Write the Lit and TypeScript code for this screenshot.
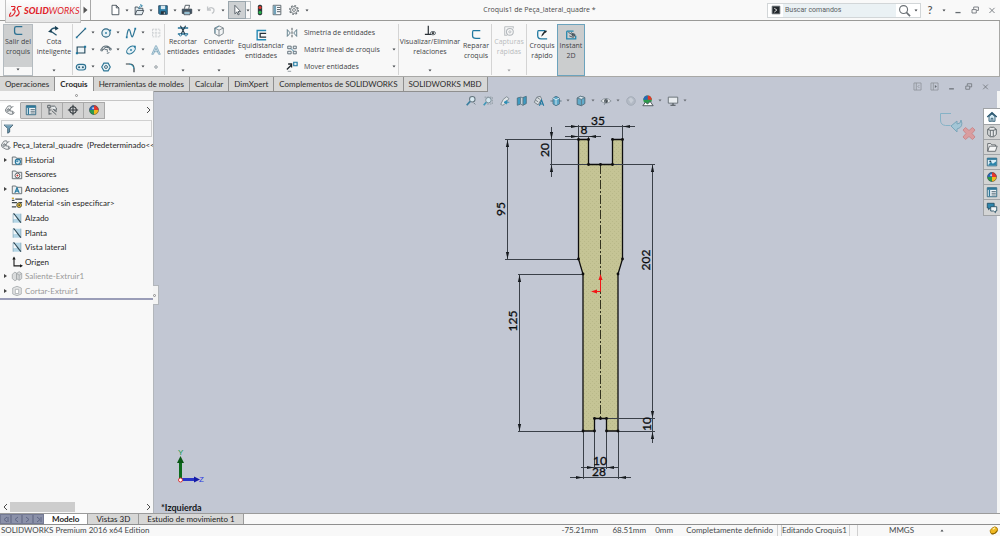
import { LitElement, html, svg, css, nothing, SVGTemplateResult } from "lit";
import { customElement, property } from "lit/decorators.js";
import { classMap } from "lit/directives/class-map.js";

const INK = "#3c4650";
const BLUE = "#1f78a0";
const TEAL = "#2a9cc0";

/* Every glyph is drawn on a 14 x 14 grid. */
const glyphs: Record<string, SVGTemplateResult> = {
  page: svg`<path d="M3.5 1.5h5l3 3v8h-8zM8.500 1.500v3h3" fill="#fff" stroke=${INK} />`,
  open: svg`<path d="M2.500 12.500v-9h3l1 1.500h5v3M2.500 12.500l2-5h8l-2 5z" fill="#e4ecf1" stroke=${INK} /><path d="M7 6c0-3 1-4 3-4M8.500.500l2.500 1.500-2 2" fill="none" stroke=${BLUE} />`,
  save: svg`<path d="M2 2h10v10H3l-1-1z" fill="#2c7ca5" stroke="#24405a" /><path d="M4.500 2h5v4h-5z" fill="#d8e8f0" /><path d="M4.500 8.500h5.500V12H4.500z" fill="#26323c" /><path d="M8 9.500h1V12H8z" fill="#dfe6ea" />`,
  print: svg`<path d="M4 5.500l1-4h5l-1 4" fill="#fff" stroke=${INK} /><path d="M1.500 6h11v5h-11z" fill="#3e5668" stroke=${INK} /><path d="M3.500 8.500h7v4h-7z" fill="#eef4f7" stroke=${INK} /><path d="M4 10.500h6" stroke=${BLUE} />`,
  undo: svg`<path d="M3 3v4h4M3.500 6.500C6 3 11 4 10.500 8c-.2 1.500-1 2.500-2.500 3" fill="none" stroke="#c3c6c9" stroke-width="1.500" />`,
  cursor: svg`<path d="M4.500 1.500v10l2.300-2.200 1.500 3.400 1.400-.7-1.500-3.200h3z" fill="#fff" stroke=${INK} stroke-width=".9" />`,
  traffic: svg`<rect x="4.500" y="1" width="5" height="12" rx="2" fill="#2b3a3c" /><circle cx="7" cy="4" r="1.800" fill="#e4372e" /><circle cx="7" cy="9.800" r="1.800" fill="#28b04a" />`,
  list: svg`<path d="M2.500 1.500h9v11h-9z" fill="#fff" stroke="#4e5960" /><path d="M3 2h3v10H3z" fill="#73a3ba" /><path d="M7 4h4M7 6.500h4M7 9h4" stroke=${INK} />`,
  gear: svg`<circle cx="7" cy="7" r="5" fill="none" stroke="#6c7479" stroke-width="1.600" stroke-dasharray="2 1.900" /><circle cx="7" cy="7" r="4" fill="#f9f9f9" stroke="#6c7479" stroke-width="1" /><circle cx="7" cy="7" r="1.700" fill="none" stroke="#6c7479" />`,
  exitSketch: svg`<path d="M12 2H5Q3 2 3 4v4q0 3 3 3h6" fill="none" stroke="#2c7192" stroke-width="1.500" />`,
  sketch: svg`<path d="M12 2H4Q3 2 3 4v4q0 3 4 3h5" fill="none" stroke=${BLUE} stroke-width="1.500" />`,
  dimension: svg`<path d="M2 8Q5 2 11 4M3 7l7 5" fill="none" stroke="#28566f" stroke-width="1.500" /><path d="M0 8l4-3 .5 4zM8 1l4.500 3L8.500 6.500z" fill="#183e52" />`,
  line: svg`<path d="M2.500 11.500l9-9" stroke="#2a617d" stroke-width="1.400" /><path d="M1 11h2v2H1zM11 1h2v2h-2z" fill=${BLUE} />`,
  circle: svg`<circle cx="7" cy="7" r="4.800" fill="#e8f2f6" stroke="#2c6683" stroke-width="1.300" /><path d="M6 6h2v2H6zM11 3h2v2h-2z" fill=${BLUE} />`,
  spline: svg`<path d="M2 12C3 2 5 1 6 5s2 9 3.500 5L12 2" fill="none" stroke="#2f7696" stroke-width="1.400" /><path d="M1 11h2v2H1zM11 1h2v2h-2z" fill=${BLUE} />`,
  grid: svg`<path d="M3 2.500h8.500v9H3zM3 7h8.500M7 2.500v9" fill="none" stroke="#c4c8cb" stroke-dasharray="2 1" />`,
  rectangle: svg`<path d="M2.500 3.500h9v7h-9z" fill="#edf5f8" stroke="#21465a" stroke-width="1.300" /><path d="M1 9.500h2.500V12H1zM10.500 2H13v2.500h-2.500z" fill=${BLUE} />`,
  arc: svg`<path d="M2 6C3 1 11 1 12 6M4 7c1-4 5-4 6-2" fill="none" stroke="#5b6d77" stroke-width="1.200" /><path d="M5.500 6.500h3v3M1 6h2v2H1zM11 5h2v2h-2z" fill="none" stroke="#566771" /><path d="M8 11l3-1" stroke="#566771" />`,
  ellipse: svg`<ellipse cx="7" cy="7" rx="5.800" ry="3.600" transform="rotate(-40 7 7)" fill="#e5f1f6" stroke="#2d7797" stroke-width="1.300" /><path d="M6 6h2v2H6zM10.500 2h2v2h-2z" fill=${BLUE} />`,
  text: svg`<path d="M2 12L6.500 2h1L12 12h-2L7 5l-3 7zM4.500 9h5" fill="#cfe1ea" stroke="#7aa4ba" stroke-width=".9" />`,
  slot: svg`<rect x="1.500" y="4" width="11" height="6.500" rx="3.200" fill="#dcecf3" stroke="#2e7292" stroke-width="1.300" /><circle cx="4.800" cy="7.200" r="1.200" fill="#2e5c75" /><circle cx="9.200" cy="7.200" r="1.200" fill="#2e5c75" />`,
  polygon: svg`<path d="M4.500 2.500h5L12 7l-2.500 4.500h-5L2 7z" fill="#e8f2f6" stroke="#2d7797" stroke-width="1.300" /><circle cx="7" cy="7" r="1.700" fill="none" stroke="#2b586e" />`,
  fillet: svg`<path d="M1 3.500h4Q10.500 3.500 10.500 9v4" fill="none" stroke="#303a40" stroke-width="1.400" /><path d="M5 3.500Q10 4 10.500 9" fill="none" stroke=${TEAL} />`,
  point: svg`<circle cx="7" cy="7" r="1.500" fill="#e8eef0" stroke="#8a9297" />`,
  trim: svg`<path d="M1 3.500h12M1 10.500h12" stroke="#237198" stroke-width="1.500" /><path d="M4 1l6 11M10 1L4 12" stroke="#233b49" stroke-width="1.300" /><circle cx="4" cy="11.500" r="1.300" fill="#fff" stroke="#237198" /><circle cx="10.500" cy="11.500" r="1.300" fill="#fff" stroke="#237198" />`,
  cube: svg`<path d="M7 1l5 2.500v6.500l-5 3L2 10V3.500zM2 3.500l5 2.500 5-2.500M7 6v7" fill="#f3f5f6" stroke="#737d83" /><path d="M2.500 9.800V4L7 1.500" stroke="#5f8ca1" fill="none" />`,
  offset: svg`<path d="M13 1.700H2.500v10.800H13" fill="none" stroke="#2389b4" stroke-width="1.600" /><path d="M13 5H6v4.500h7" fill="none" stroke="#25313a" stroke-width="1.500" />`,
  mirror: svg`<path d="M7 1v12" stroke="#303a40" stroke-dasharray="3 1" /><path d="M1.500 3v8l3.500-4zM12.500 3v8L9 7z" fill="#eef3f5" stroke="#52717f" />`,
  pattern: svg`<path d="M2 2.500h4v3H2zM8.500 2.500h3.500v3H8.500zM2 8.500h4v3H2zM8.500 8.500h3.500v3H8.500z" fill="#e8f1f5" stroke="#55646d" /><path d="M6 5.500l3 3" stroke=${BLUE} />`,
  move: svg`<path d="M9 1.500h4v4H9z" fill="#e4f1f7" stroke=${BLUE} stroke-width="1.300" /><path d="M1 10l5-5M2.500 3.500h4v4" fill="none" stroke="#20282d" stroke-width="1.500" /><path d="M2 12h4" stroke="#8a9398" />`,
  relations: svg`<path d="M5 1v10M1 11h8" stroke="#2a3136" stroke-width="1.400" /><ellipse cx="10.500" cy="9.500" rx="3" ry="2" fill="#dfe5e8" stroke="#555f65" /><circle cx="10.500" cy="9.500" r="1.200" fill="#333" />`,
  capture: svg`<path d="M2 2h10v2M2 2v10h3" fill="none" stroke="#babec1" stroke-width="1.200" /><circle cx="8" cy="8" r="4" fill="none" stroke="#b3b8bc" stroke-width="1.200" /><circle cx="8" cy="8" r="1.300" fill="none" stroke="#b3b8bc" />`,
  rapid: svg`<path d="M11 2H3Q2 2 2 4v4q0 3.500 4 3.500h7" fill="none" stroke=${BLUE} stroke-width="1.500" /><path d="M6 9l1-3 3-4h3l-1.500 2.500h-1L8.500 7z" fill="#1e262b" />`,
  instant: svg`<path d="M2 2.500h8M2 2.500v9h10.500V8" fill="none" stroke="#2287ae" stroke-width="1.500" /><path d="M4 4l7 4M7 4l5 4M5 8l5 2" stroke="#394a54" /><circle cx="10" cy="7" r="1.600" fill="none" stroke="#394a54" />`,
  part: svg`<path d="M1.500 7l3-4.500 3-.5 1 2-2 4 4 .5 1.500 2-2 1.500H7L2.500 9.500z" fill="#eceeef" stroke="#62696e" stroke-width=".9" /><path d="M8 4l3-1M7.500 7.500L5 5M10 9v2.500" stroke="#62696e" stroke-width=".9" fill="none" /><circle cx="4.500" cy="7.500" r="1.300" fill="#b9bec1" stroke="#62696e" stroke-width=".7" />`,
  props: svg`<path d="M1.500 2h11v10.500h-11z" fill="#eef4f7" stroke="#235e7a" /><path d="M1.500 2h11v2.500h-11z" fill="#2d7799" /><path d="M4 4.500V12" stroke="#2d7799" stroke-width="1.600" /><path d="M6.500 6.500h5M6.500 8.500h5M6.500 10.500h5" stroke="#4d6370" />`,
  config: svg`<path d="M2 1.500h3v3H2zM3.500 4.500v8M3.500 7h3M3.500 11.500h3" fill="none" stroke="#4a5359" /><path d="M6 2.500h4l2 2v3L8 6M7 8l5 4.500M9.500 7.500l3 1.500" fill="#e8ecee" stroke="#4a5359" />`,
  target: svg`<circle cx="7" cy="7" r="3.800" fill="none" stroke="#2c3338" stroke-width="1.200" /><path d="M7 1v12M1 7h12" stroke="#2c3338" stroke-width="1.200" />`,
  ball: svg`<path d="M7 7L7 1.500A5.500 5.500 0 0 1 12.500 7z" fill="#e6352b" /><path d="M7 7h5.500A5.500 5.500 0 0 1 7 12.500z" fill="#f1b71d" /><path d="M7 7v5.500A5.500 5.500 0 0 1 1.500 7z" fill="#2a9b4c" /><path d="M7 7H1.500A5.500 5.500 0 0 1 7 1.500z" fill="#2767b8" /><circle cx="7" cy="7" r="5.300" fill="none" stroke="#37414a" stroke-width=".6" /><circle cx="6" cy="5" r="1.200" fill="#fff" opacity=".7" />`,
  funnel: svg`<path d="M1.500 2.500h11L8.500 7v4.500L6 13V7z" fill="#6f9fb8" stroke="#2b4d61" /><path d="M2.500 2.500h9" stroke="#d6e7ef" />`,
  history: svg`<path d="M1.500 12.500v-9h4l1 1.500h6v7.500z" fill="#eceff1" stroke="#596268" /><circle cx="8" cy="9" r="3" fill="#d9eef7" stroke="#23749b" stroke-width="1.300" /><path d="M5 8l3 1V7" stroke="#23749b" fill="none" />`,
  sensor: svg`<path d="M1.500 12.500v-9h4l1 1.500h6v7.500z" fill="#eceff1" stroke="#596268" /><circle cx="7.500" cy="8.800" r="2.800" fill="#fff" stroke="#4b5358" /><circle cx="7.500" cy="8.800" r="1.200" fill="#c0352c" />`,
  notes: svg`<path d="M1.500 12.500v-9h4l1 1.500h6v7.500z" fill="#eceff1" stroke="#596268" /><path d="M4.500 11.500l2.500-6 2.500 6M5.500 9.500h3" fill="none" stroke="#1f78a0" stroke-width="1.300" />`,
  material: svg`<path d="M5 2.500h8M1 6.500h6M1 11.500h5M1 4h3M9 6.500h4" stroke="#3e474d" stroke-width="1.400" /><path d="M1 1.500h2.500" stroke="#c9a227" stroke-width="1.500" /><circle cx="9.500" cy="9.500" r="2.800" fill="#e5bd3c" stroke="#4c4a35" /><circle cx="9.500" cy="9.500" r=".9" fill="#333" />`,
  plane: svg`<path d="M2.500 2h9v10.500h-9z" fill="#b4d6e6" /><path d="M2.500 2v10.500M11.500 2v10.500" stroke="#86aabb" /><path d="M3 1.500l8.500 11" stroke="#2e4652" stroke-width="1.300" /><path d="M3 2.500v6L7 8z" fill="#f1f6f8" />`,
  origin: svg`<path d="M3.500 2v9.500H12" fill="none" stroke="#1c1c1c" stroke-width="1.300" /><path d="M1.500 4l2-3.500 2 3.500zM10.500 9.500l3.500 2-3.500 2z" fill="#1c1c1c" />`,
  boss: svg`<path d="M1.500 5l3-2.500 2 1v8l-2 1-3-2.500zM6.500 4l3-2 3 2v6l-3 2-3-2z" fill="#dadcdd" stroke="#a3a7aa" /><path d="M9.500 6v6M6.500 4l3 2 3-2" stroke="#a3a7aa" fill="none" />`,
  cut: svg`<path d="M2 3.500l5-2 5 2v7l-5 2-5-2z" fill="#e4e5e6" stroke="#a9adb0" /><path d="M5 5h4v5H5z" fill="#fff" stroke="#a9adb0" />`,
  zoomFit: svg`<circle cx="8.500" cy="5" r="3.200" fill="#d9ebf3" stroke="#64747d" stroke-width="1.200" /><path d="M6 7.500l-4 4.500" stroke="#3b7f9f" stroke-width="2" /><path d="M10 9l2 2" stroke="#64747d" />`,
  zoomArea: svg`<path d="M3 2.500h9v8H6" fill="none" stroke="#8b979e" stroke-dasharray="2 1" /><circle cx="7.500" cy="6" r="3.200" fill="#d5e6ef" stroke="#7a8b95" stroke-width="1.100" /><path d="M5 8.500L2 12" stroke="#3e97b8" stroke-width="2" />`,
  prevView: svg`<path d="M2 11l3-6 4-3 2.500 2-3 5-4 3z" fill="#dfe4e7" stroke="#78848b" /><path d="M6 8.500h6M6 8.500l3-2v4z" stroke="#2b8db5" fill="#2b8db5" />`,
  section: svg`<path d="M1.500 3.500l4-1v8l-4 1.500zM8 3l4-1.500V10l-4 2z" fill="#3c9ac2" stroke="#4b6f80" /><path d="M5.500 2.500L8 3v9l-2.500-1.500z" fill="#d5e4eb" stroke="#667a85" />`,
  dynamic: svg`<path d="M1.500 8.500l3-6 4-1 1.500 3-4 7z" fill="#d8dde0" stroke="#6d777e" /><path d="M3 6l3 2M5 3l3 2" stroke="#6d777e" /><path d="M7.500 12.500L10 6l2.500 6.500M8.500 10.500h3" fill="none" stroke="#1f78a0" stroke-width="1.300" />`,
  orient: svg`<path d="M3.500 3.500l3.500-2 4 2v7l-4 2-3.500-2z" fill="#5aa7c8" stroke="#4c7285" /><path d="M7 5.500v6M3.500 3.500L7 5.500l4-2" stroke="#e5f1f6" fill="none" /><path d="M.5 7h3M11 7h2.500" stroke="#4b6776" />`,
  display: svg`<path d="M2.500 3.500l4-2 5 1.500v7l-4 2.500-5-1.500z" fill="#62abca" stroke="#4c6572" /><path d="M2.500 3.500l5 1.500 4-2-5-1.500zM7.500 5v7.500" fill="#dcebf2" stroke="#5c7582" />`,
  eye: svg`<path d="M1 7q6-6 12 0-6 5-12 0z" fill="#e8ebee" stroke="#7f8a92" stroke-width=".9" /><circle cx="7" cy="7" r="2.200" fill="#42494e" /><path d="M5 11.500l3-8" stroke="#7f8a92" />`,
  ghostBall: svg`<circle cx="7" cy="7" r="5" fill="#b3bac5" stroke="#a2a9b4" /><path d="M4 5l3-2 3 3-3 4z" fill="#c7cdd6" />`,
  scene: svg`<circle cx="6.500" cy="5.500" r="5" fill="#2c9b4b" /><path d="M6.500 5.500v-5a5 5 0 0 1 5 5z" fill="#e6352b" /><path d="M6.500 5.500h-5a5 5 0 0 1 5-5z" fill="#2767b8" /><path d="M1 12.500l3-4 2.500 2 3-3 3.500 5z" fill="#fff" stroke="#3d464c" />`,
  monitor: svg`<path d="M1.500 2.500h11v7h-11z" fill="#e8ecef" stroke="#5d666c" /><path d="M7 9.500v2M4 12h6" stroke="#454d52" stroke-width="1.300" />`,
  dockLeft: svg`<path d="M2.500 2.500h9v9h-9zM5.500 2.500v9M9.500 5L7.500 7l2 2" fill="none" stroke="#8d9299" />`,
  dockRight: svg`<path d="M2.500 2.500h9v9h-9zM5.500 2.500v9" fill="none" stroke="#8d9299" /><path d="M7.500 5l2.500 2-2.500 2z" fill="#62686e" />`,
  min: svg`<path d="M4 10h6" stroke="#666c72" stroke-width="1.500" />`,
  restore: svg`<path d="M3.500 6.500h5v4h-5zM5.500 6V3.500h5.500v4H9" fill="none" stroke="#6d7277" />`,
  close: svg`<path d="M4 4.500l6 6M10 4.500l-6 6" stroke="#6d7277" />`,
  lens: svg`<circle cx="6" cy="6" r="4.300" fill="none" stroke="#6a7075" stroke-width="1.200" /><path d="M9 9l4 4" stroke="#6a7075" stroke-width="1.700" />`,
  prompt: svg`<path d="M2.500 2.500h9v9h-9z" fill="#23282c" stroke="#6d7479" /><path d="M5 5l3 2-3 2.500" fill="none" stroke="#fff" />`,
  home: svg`<path d="M1.500 7L7 2l5.500 5" fill="none" stroke="#22516b" stroke-width="1.500" /><path d="M3.500 6.500V12h7V6.500L7 3.500z" fill="#d6ebf4" stroke="#22516b" /><path d="M6 12V8.500h2V12" fill="#fff" stroke="#22516b" />`,
  library: svg`<path d="M2 4l3-2.500h4L12 4v6l-3 2.500H5L2 10z" fill="#e7e9ea" stroke="#4d555a" /><path d="M5 5v7M8.500 5v7M2 4l3 1h3.500L12 4" fill="none" stroke="#4d555a" />`,
  folder: svg`<path d="M2 12V3h3.500l1 1.500H11V6M2 12l2-6h9l-2 6z" fill="#f5f6f6" stroke="#595f63" />`,
  palette: svg`<path d="M1.500 2.500h11v9h-11z" fill="#d9edf6" stroke="#2b607b" /><path d="M1.500 2.500h11v2h-11z" fill="#2d7799" /><path d="M3 9.500L6 7l2 2 4-3v5H3z" fill="#2c85ab" /><circle cx="5" cy="6.500" r="1.200" fill="#21495e" />`,
  chat: svg`<path d="M1.500 1.500h8v5.500H5l-2 2V7H1.500z" fill="#2f86ad" stroke="#234d62" /><path d="M5.500 5.500h7v5H11v2l-2-2H5.500z" fill="#f4f7f8" stroke="#234d62" />`,
  coin: svg`<ellipse cx="7.500" cy="7" rx="5.200" ry="3.800" transform="rotate(-40 7.500 7)" fill="#efb820" stroke="#a97c0d" /><path d="M4 11q5 1 8-4" stroke="#8c6606" stroke-width="1.300" fill="none" /><path d="M6 5.500l3-2" stroke="#fff3b8" stroke-width="1.500" />`,
};

const drawGlyph = (name: string, size = 12) =>
  html`<svg class="glyph" width=${size} height=${size} viewBox="0 0 14 14" aria-hidden="true">${glyphs[name]}</svg>`;

const drawCaret = () =>
  html`<svg class="caret" width="4" height="3" viewBox="0 0 4 3" aria-hidden="true"><path d="M.5.500h3L2 2.500z" fill="#3f4448" /></svg>`;

const base = css`
  :host,
  * {
    box-sizing: border-box;
  }
  button,
  input {
    font: inherit;
    color: inherit;
    border: 0;
    padding: 0;
    margin: 0;
    background: none;
    border-radius: 0;
    outline: 0;
  }
  button {
    display: flex;
    align-items: center;
    justify-content: center;
  }
  svg {
    display: block;
    flex: none;
  }
`;

@customElement("sw-titlebar")
export class SwTitlebar extends LitElement {
  static styles = [
    base,
    css`
      :host {
        display: grid;
        grid-template-columns: auto 1fr auto;
        align-items: center;
        height: 21px;
        background: #f9f9f9;
        border-bottom: 1px solid #9a9a98;
        position: relative;
        z-index: 1;
      }
      .left,
      .right {
        display: flex;
        align-items: center;
        height: 20px;
      }
      .logo {
        align-self: flex-start;
        height: 23px;
        width: 76px;
        margin-left: 5px;
        padding-left: 3px;
        display: flex;
        align-items: center;
        gap: 2px;
        background: linear-gradient(#fdfdfd, #e6e6e6);
        border: 1px solid #c2c2c2;
        border-top: 0;
        color: #e0242b;
        font: italic 9px/20px "Lato", sans-serif;
      }
      .logo b {
        font-weight: 900;
      }
      .expand {
        width: 10px;
        height: 20px;
        border-right: 1px solid #a8a8a8;
      }
      .tools {
        display: flex;
        align-items: center;
        padding-left: 17px;
      }
      .tool {
        width: 14px;
        height: 18px;
      }
      .drop {
        width: 10px;
        height: 18px;
      }
      .pair {
        display: flex;
      }
      .pair.on .tool {
        background: #cdd0d2;
        width: 18px;
        border: 1px solid #9aa6ad;
      }
      .pair.on .drop {
        width: 5px;
        border: 1px solid #b9c0c4;
        border-left: 0;
      }
      .single {
        width: 17px;
        height: 18px;
      }
      h1 {
        margin: 0;
        font-family: "Open Sans", sans-serif;
        font-size: 7px;
        font-weight: 400;
        text-align: center;
        color: #4a4a4a;
      }
      .search {
        display: flex;
        align-items: center;
        width: 154px;
        height: 15px;
        border: 1px solid #d2d6d8;
        background: #fff;
      }
      .search label {
        width: 15px;
        display: flex;
        justify-content: center;
      }
      .search input {
        flex: 1;
        min-width: 0;
        height: 13px;
        background: #eaf1f4;
        padding-left: 2px;
        font-family: "Roboto", sans-serif;
        font-size: 7px;
      }
      .search input::placeholder {
        color: #5a5f63;
        opacity: 1;
      }
      .search .find {
        width: 16px;
      }
      .search .drop {
        width: 8px;
        height: 13px;
      }
      .help {
        width: 18px;
        font-size: 11px;
        font-weight: 600;
        color: #555;
      }
      .win {
        width: 17px;
        height: 18px;
      }
    `,
  ];

  render() {
    const pairs = [["page", "Nuevo"], ["open", "Abrir"], ["save", "Guardar"], ["print", "Imprimir"], ["undo", "Deshacer"], ["cursor", "Seleccionar"]];
    return html`
      <div class="left">
        <div class="logo">
          <svg width="13" height="15" viewBox="0 0 13 15" aria-hidden="true">
            <path d="M2 2.500h3.500q1 .5 0 2L4 6M3 6h2.500Q7 7 5 10t-5 2l2-3.500M12.500 2.500H9.500Q7.500 4 9 6t1 3.500Q9 12 6.500 12" fill="none" stroke="#e0242b" stroke-width="1.200" />
          </svg>
          <span><b>SOLID</b>WORKS</span>
        </div>
        <button class="expand" aria-label="Menú">
          <svg width="5" height="8" viewBox="0 0 5 8"><path d="M.5.500L4.500 4 .500 7.500z" fill="#555" /></svg>
        </button>
        <div class="tools">
          ${pairs.map(
            ([g, t]) => html`<div class=${classMap({ pair: true, on: g === "cursor" })}>
              <button class="tool" aria-label=${t}>${drawGlyph(g)}</button>
              <button class="drop" aria-label=${t + ", opciones"}>${drawCaret()}</button>
            </div>`
          )}
          <button class="single" aria-label="Reconstruir">${drawGlyph("traffic")}</button>
          <button class="single" aria-label="Propiedades">${drawGlyph("list")}</button>
          <button class="single" aria-label="Opciones">${drawGlyph("gear")}</button>
          <button class="drop" aria-label="Más opciones">${drawCaret()}</button>
        </div>
      </div>
      <h1>Croquis1 de Peça_lateral_quadre *</h1>
      <div class="right">
        <div class="search">
          <label for="q" aria-label="Buscar comandos">${drawGlyph("prompt", 12)}</label>
          <input id="q" type="text" placeholder="Buscar comandos" />
          <button class="find" aria-label="Buscar">${drawGlyph("lens", 13)}</button>
          <button class="drop" aria-label="Ámbito">${drawCaret()}</button>
        </div>
        <button class="help">?</button>
        <button class="drop" aria-label="Ayuda">${drawCaret()}</button>
        ${["min", "restore", "close"].map((g) => html`<button class="win" aria-label=${g}>${drawGlyph(g)}</button>`)}
      </div>
    `;
  }
}

@customElement("sw-ribbon")
export class SwRibbon extends LitElement {
  static styles = [
    base,
    css`
      :host {
        display: flex;
        height: 56px;
        padding: 3px 0 0 3px;
        background: #f8f8f8;
        border-bottom: 1px solid #a8a8a6;
        border-right: 1px solid #a8a8a6;
        font-family: "Open Sans", sans-serif;
        font-size: 7px;
        line-height: 10px;
        color: #3f4447;
      }
      .big {
        flex-direction: column;
        justify-content: flex-start;
        padding-top: 1px;
        height: 52px;
        text-align: center;
        white-space: nowrap;
      }
      .big .caret {
        margin: auto 0 4px;
      }
      .low {
        padding-top: 5px;
      }
      .w28 {
        width: 28px;
      }
      .w30 {
        width: 30px;
      }
      .w34 {
        width: 34px;
      }
      .w36 {
        width: 36px;
      }
      .w48 {
        width: 48px;
      }
      .w62 {
        width: 62px;
      }
      .on {
        background: linear-gradient(#cdcfd0 0 42px, #f8f8f8 42px);
        border: 1px solid #b4bbc0;
        padding-top: 0;
      }
      .on.low {
        background: #cbcdce;
        border-color: #6ba3bd;
        padding-top: 4px;
      }
      .off {
        color: #b9bcbe;
      }
      .off .caret {
        opacity: 0.5;
      }
      .sep {
        width: 1px;
        height: 51px;
        background: #d4d4d4;
        flex: none;
      }
      .gap {
        margin-left: 3px;
      }
      .grid {
        display: grid;
        grid-template-columns: 25px 25px 25px 16px;
        grid-template-rows: repeat(3, 17px);
      }
      .cell {
        display: flex;
        align-items: center;
      }
      .cell .tool {
        width: 16px;
        height: 17px;
      }
      .cell .drop {
        width: 8px;
        height: 17px;
      }
      .rows {
        width: 113px;
        display: grid;
        grid-template-rows: repeat(3, 17px);
      }
      .row {
        display: flex;
        align-items: center;
        text-align: left;
      }
      .row .main {
        flex: 1;
        justify-content: flex-start;
        gap: 6px;
        padding-left: 1px;
      }
      .row .drop {
        width: 9px;
        height: 17px;
      }
    `,
  ];

  private big(g: string, lines: string[], cls: string, caret = true) {
    return html`<button class="big ${cls}" ?disabled=${cls.includes("off")}>
      ${drawGlyph(g)}<span>${lines[0]}<br />${lines[1]}</span>${caret ? drawCaret() : nothing}
    </button>`;
  }

  render() {
    const cells: [string, boolean][] = [
      ["line", true], ["circle", true], ["spline", true], ["grid", false],
      ["rectangle", true], ["arc", true], ["ellipse", true], ["text", false],
      ["slot", true], ["polygon", false], ["fillet", true], ["point", false],
    ];
    const rows: [string, string, boolean][] = [
      ["mirror", "Simetría de entidades", false],
      ["pattern", "Matriz lineal de croquis", true],
      ["move", "Mover entidades", true],
    ];
    return html`
      ${this.big("exitSketch", ["Salir del", "croquis"], "w30 on")}
      ${this.big("dimension", ["Cota", "inteligente"], "w36 gap")}
      <div class="sep"></div>
      <div class="grid">
        ${cells.map(
          ([g, c]) => html`<div class="cell">
            <button class="tool" aria-label=${g}>${drawGlyph(g)}</button>
            ${c ? html`<button class="drop" aria-label=${g + " +"}>${drawCaret()}</button>` : nothing}
          </div>`
        )}
      </div>
      <div class="sep"></div>
      ${this.big("trim", ["Recortar", "entidades"], "w36")}
      ${this.big("cube", ["Convertir", "entidades"], "w36")}
      ${this.big("offset", ["Equidistanciar", "entidades"], "w48 low", false)}
      <div class="rows">
        ${rows.map(
          ([g, t, c]) => html`<div class="row">
            <button class="main">${drawGlyph(g)}<span>${t}</span></button>
            ${c ? html`<button class="drop" aria-label=${t + " +"}>${drawCaret()}</button>` : nothing}
          </div>`
        )}
      </div>
      <div class="sep"></div>
      ${this.big("relations", ["Visualizar/Eliminar", "relaciones"], "w62")}
      ${this.big("sketch", ["Reparar", "croquis"], "w30 low", false)}
      <div class="sep"></div>
      ${this.big("capture", ["Capturas", "rápidas"], "w34 off")}
      <div class="sep"></div>
      ${this.big("rapid", ["Croquis", "rápido"], "w30 low", false)}
      ${this.big("instant", ["Instant", "2D"], "w28 low on", false)}
    `;
  }
}

@customElement("sw-command-tabs")
export class SwCommandTabs extends LitElement {
  static styles = [
    base,
    css`
      :host {
        display: flex;
        justify-content: space-between;
        height: 14px;
        font-size: 8px;
        color: #2b2b2b;
      }
      .tabs,
      .controls {
        display: flex;
      }
      .tab {
        height: 15px;
        padding: 0 5px;
        background: #d7d7d6;
        border-right: 1px solid #8f8f8f;
        border-bottom: 1px solid #8f8f8f;
        white-space: nowrap;
      }
      .active {
        background: #f8f8f8;
        border-bottom-color: #f8f8f8;
        font-weight: 700;
      }
      .controls {
        padding-right: 6px;
      }
      .win {
        width: 17px;
        height: 18px;
      }
    `,
  ];

  render() {
    const tabs = ["Operaciones", "Croquis", "Herramientas de moldes", "Calcular", "DimXpert", "Complementos de SOLIDWORKS", "SOLIDWORKS MBD"];
    return html`
      <div class="tabs" role="tablist">
        ${tabs.map((t, i) => html`<button role="tab" class=${classMap({ tab: true, active: i === 1 })}>${t}</button>`)}
      </div>
      <div class="controls">
        ${["dockLeft", "dockRight", "min", "restore", "close"].map(
          (g) => html`<button class="win" aria-label=${g}>${drawGlyph(g, 11)}</button>`
        )}
      </div>
    `;
  }
}

@customElement("sw-feature-tree")
export class SwFeatureTree extends LitElement {
  static styles = [
    base,
    css`
      :host {
        display: flex;
        flex-direction: column;
        position: relative;
        width: 154px;
        background: #f8f8f8;
        border-right: 1px solid #b2b6bb;
        font-size: 8px;
        color: #1f1f1f;
      }
      .grip {
        height: 10px;
        display: flex;
        align-items: center;
        justify-content: center;
        border-bottom: 1px solid #c6c6c6;
      }
      .dot {
        width: 3px;
        height: 3px;
        border-radius: 50%;
        border: 1px solid #8c8c8c;
      }
      .tabs {
        display: flex;
        align-items: center;
        height: 18px;
        padding-right: 1px;
      }
      .tab {
        width: 21px;
        height: 17px;
        background: #d2d2d2;
        border: 1px solid #a9a9a9;
        border-left: 0;
      }
      .tab.active {
        background: #fff;
        border-color: #f8f8f8 #a9a9a9 #f8f8f8 #f8f8f8;
      }
      .more {
        margin-left: auto;
        width: 8px;
      }
      .filter {
        display: flex;
        align-items: center;
        height: 17px;
        margin: 1px;
        border: 1px solid #d0d0d0;
      }
      .filter input {
        flex: 1;
        min-width: 0;
        height: 14px;
      }
      ul {
        list-style: none;
        margin: 0;
        padding: 0;
        height: 162px;
        display: flex;
        flex-direction: column;
        border-bottom: 2px solid #9a9db8;
      }
      li {
        flex: 1;
        display: flex;
        align-items: center;
        white-space: pre;
        overflow: hidden;
      }
      .toggle {
        width: 10px;
        height: 12px;
      }
      .glyph {
        margin: 0 2px 0 1px;
      }
      .root .glyph {
        margin: 0 1px 0 0;
      }
      .dim {
        color: #989898;
      }
      .scroll {
        margin-top: auto;
        height: 12px;
        display: flex;
        align-items: center;
      }
      .scroll button {
        width: 10px;
        height: 12px;
      }
      .track {
        flex: 1;
        height: 10px;
      }
      .thumb {
        width: 49%;
        height: 10px;
        background: #cdcdcd;
      }
      .handle {
        position: absolute;
        left: 153px;
        top: 194px;
        width: 6px;
        height: 20px;
        display: flex;
        align-items: center;
        background: #f4f4f4;
        border: 1px solid #b2b6bb;
        border-left: 0;
      }
    `,
  ];

  private chevron(d: string) {
    return html`<svg width="5" height="8" viewBox="0 0 5 8" aria-hidden="true"><path d=${d} fill="none" stroke="#4a4a4a" /></svg>`;
  }

  render() {
    const items: [string, string, boolean, boolean][] = [
      ["history", "Historial", true, false],
      ["sensor", "Sensores", false, false],
      ["notes", "Anotaciones", true, false],
      ["material", "Material <sin especificar>", false, false],
      ["plane", "Alzado", false, false],
      ["plane", "Planta", false, false],
      ["plane", "Vista lateral", false, false],
      ["origin", "Origen", false, false],
      ["boss", "Saliente-Extruir1", true, true],
      ["cut", "Cortar-Extruir1", true, true],
    ];
    return html`
      <div class="grip"><span class="dot"></span></div>
      <div class="tabs">
        ${["part", "props", "config", "target", "ball"].map(
          (g, i) => html`<button class=${classMap({ tab: true, active: i === 0 })} aria-label=${g}>${drawGlyph(g)}</button>`
        )}
        <button class="more" aria-label="Más">${this.chevron("M1 1l3 3-3 3")}</button>
      </div>
      <div class="filter">
        <label for="f" aria-label="Filtrar">${drawGlyph("funnel", 11)}</label>
        <input id="f" type="text" />
      </div>
      <ul>
        <li class="root">${drawGlyph("part")}Peça_lateral_quadre  (Predeterminado&lt;&lt;</li>
        ${items.map(
          ([g, t, open, dim]) => html`<li class=${classMap({ dim })}>
            ${open
              ? html`<button class="toggle" aria-label=${"Expandir " + t}>
                  <svg width="3" height="4" viewBox="0 0 3 4"><path d="M0 0l3 2-3 2z" fill="#444" /></svg></button
                >`
              : html`<span class="toggle"></span>`}${drawGlyph(g)}<span>${t}</span>
          </li>`
        )}
      </ul>
      <div class="scroll">
        <button aria-label="Izquierda">${this.chevron("M4 1L1 4l3 3")}</button>
        <div class="track"><div class="thumb"></div></div>
        <button aria-label="Derecha">${this.chevron("M1 1l3 3-3 3")}</button>
      </div>
      <div class="handle"><span class="dot"></span></div>
    `;
  }
}

const arrowHead = (x: number, y: number, dir: "l" | "r" | "u" | "d") => {
  const shapes = {
    l: `M${x} ${y}l7-1.600v3.200z`,
    r: `M${x} ${y}l-7-1.600v3.200z`,
    u: `M${x} ${y}l-1.600 7h3.200z`,
    d: `M${x} ${y}l-1.600-7h3.200z`,
  };
  return svg`<path d=${shapes[dir]} fill="#161a1e" />`;
};

const dimText = (x: number, y: number, value: string, upright = true) =>
  svg`<text x=${x} y=${y} class="dim" transform=${upright ? nothing : `rotate(-90 ${x} ${y})`}>${value}</text>`;

@customElement("sw-sketch")
export class SwSketch extends LitElement {
  static styles = css`
    :host {
      display: block;
    }
    svg {
      display: block;
    }
    .dim {
      font: 400 12px "Lato", sans-serif;
      text-anchor: middle;
      dominant-baseline: central;
      fill: #0c0e10;
      stroke: #0c0e10;
      stroke-width: 0.3px;
    }
  `;

  render() {
    const nodes = [
      [578.5, 139.5], [588.5, 139.5], [588.5, 164.5], [600.5, 164.5], [612.5, 164.5], [612.5, 139.5], [622.5, 139.5], [622.5, 259],
      [618, 274], [618, 431], [606.5, 431], [606.5, 418.5], [600.5, 418.5], [594.5, 418.5], [594.5, 431], [583, 431], [583, 274], [578.5, 259],
    ];
    return html`
      <svg width="191" height="374" viewBox="480 110 191 374" role="img" aria-label="Croquis acotado">
        <defs>
          <pattern id="grain" width="4" height="4" patternUnits="userSpaceOnUse">
            <path d="M0 0h4v4H0z" fill="#c5c495" />
            <path d="M0 1h1v1H0zM2 3h1v1H2z" fill="#b9b989" />
          </pattern>
        </defs>
        <path
          d="M578.500 139.500H588.500V164.500H612.500V139.500H622.500V259L618 274V431H606.500V418.500H594.500V431H583V274L578.500 259Z"
          fill="url(#grain)" stroke="#0d0d0d" stroke-width="1.300"
        />
        <path d="M600.500 165V418" stroke="#33331f" stroke-dasharray="9 2 2 2" />
        <g stroke="#3a4048" fill="none">
          <path d="M505 139.500H578M550 164.500H588M505 259.500H578M518 274.500H582M518 431.500H582M613 164.500H655M607 418.500H655M619 431.500H655" />
          <path d="M578.500 125V139M622.500 125V139M588.500 136V139M583.500 432V479M618.500 432V479M594.500 432V469M606.500 432V469" />
          <path d="M565 126.500H635M565 136.500H601M581 467.500H619M570 477.500H631" />
          <path d="M551.500 127V177M507.500 140V259M519.500 275V431M652.500 165V443" />
        </g>
        ${arrowHead(578, 126.5, "r")} ${arrowHead(623, 126.5, "l")} ${arrowHead(578, 136.5, "r")} ${arrowHead(589, 136.5, "l")}
        ${arrowHead(551.5, 139, "d")} ${arrowHead(551.5, 165, "u")} ${arrowHead(507.5, 140, "u")} ${arrowHead(507.5, 259, "d")}
        ${arrowHead(519.5, 275, "u")} ${arrowHead(519.5, 431, "d")} ${arrowHead(652.5, 165, "u")} ${arrowHead(652.5, 418, "d")}
        ${arrowHead(652.5, 432, "u")} ${arrowHead(594, 467.5, "r")} ${arrowHead(607, 467.5, "l")} ${arrowHead(583, 477.5, "r")}
        ${arrowHead(619, 477.5, "l")}
        ${nodes.map(([x, y]) => svg`<circle cx=${x} cy=${y} r="1.400" fill="#0d0d0d" />`)}
        <path d="M600.500 276V291.500H593" fill="none" stroke="#f21616" />
        <path d="M600.500 274l-2 6h4zM591 291.500l6-2v4z" fill="#f21616" />
        ${dimText(598, 120, "35")} ${dimText(584, 129, "8")} ${dimText(544, 150, "20", false)} ${dimText(500, 209, "95", false)}
        ${dimText(512, 321, "125", false)} ${dimText(645, 260, "202", false)} ${dimText(646, 424, "10", false)}
        ${dimText(600, 460, "10")} ${dimText(599, 471, "28")}
      </svg>
    `;
  }
}

@customElement("sw-viewport")
export class SwViewport extends LitElement {
  static styles = [
    base,
    css`
      :host {
        display: flex;
        flex-direction: column;
        align-items: center;
        flex: 1;
        min-width: 0;
        position: relative;
        margin-right: 3px;
      }
      .hud {
        display: flex;
        align-items: center;
        height: 19px;
      }
      .tool {
        width: 17px;
        height: 18px;
      }
      .drop {
        width: 8px;
        height: 18px;
      }
      .hud .caret {
        opacity: 0.7;
      }
      .confirm {
        position: absolute;
        right: 20px;
        top: 19px;
      }
      .triad {
        position: absolute;
        left: 7px;
        bottom: 0;
        font: 700 9px/11px "Lato", sans-serif;
        color: #14181c;
      }
      .triad svg {
        margin: 0 0 18px 14px;
      }
      .axis {
        font: 8px "Liberation Sans", sans-serif;
      }
    `,
  ];

  render() {
    const tools: [string, boolean][] = [
      ["zoomFit", false], ["zoomArea", false], ["prevView", false], ["section", false], ["dynamic", false],
      ["orient", true], ["display", true], ["eye", true], ["ghostBall", false], ["scene", true], ["monitor", true],
    ];
    return html`
      <div class="hud">
        ${tools.map(
          ([g, c]) => html`<button class="tool" aria-label=${g}>${drawGlyph(g)}</button>
            ${c ? html`<button class="drop" aria-label=${g + " +"}>${drawCaret()}</button>` : nothing}`
        )}
      </div>
      <sw-sketch></sw-sketch>
      <div class="confirm">
        <svg width="38" height="30" viewBox="0 0 38 30" aria-label="Confirmar">
          <path d="M12 3.500H1.500V10q0 5 5 5.500h5" fill="none" stroke="#86b2c6" />
          <path d="M12 16l6-5v3q4 0 4-4 3 7-4 9v3z" fill="#a4c6d6" stroke="#7aa6ba" />
          <path d="M24 20l2.500-2.500 3.500 3 3.500-3 2.500 2.500-3 3.500 3 3.500-2.500 2.500-3.500-3-3.500 3-2.500-2.500 3-3.500z" fill="#da9d9f" stroke="#c98a8d" />
        </svg>
      </div>
      <div class="triad">
        <svg width="30" height="36" viewBox="0 0 30 36" aria-hidden="true">
          <path d="M5.500 12V31" stroke="#0d6b1c" stroke-width="3" />
          <path d="M5.500 8L2 15h7z" fill="#0a5716" />
          <path d="M6 31.500h14" stroke="#2a35c8" stroke-width="3" />
          <path d="M25 31.500L19 28.500v6z" fill="#141ba6" />
          <circle cx="5.500" cy="32" r="2" fill="#fff" stroke="#d33" />
          <text class="axis" x="3" y="7" fill="#139a4a">Y</text>
          <text class="axis" x="24" y="34" fill="#2a35e0">Z</text>
        </svg>
        *Izquierda
      </div>
    `;
  }
}

@customElement("sw-task-pane")
export class SwTaskPane extends LitElement {
  static styles = [
    base,
    css`
      :host {
        position: absolute;
        right: 0;
        top: 17px;
        width: 17px;
        display: flex;
        flex-direction: column;
        border: 1px solid #a0a3a6;
        border-right: 0;
        background: #d3d4d4;
      }
      button {
        height: 15px;
        border-bottom: 1px solid #a0a3a6;
      }
      button:first-child {
        height: 16px;
        background: #fff;
      }
      button:last-child {
        border-bottom: 0;
      }
    `,
  ];

  render() {
    return ["home", "library", "folder", "palette", "ball", "props", "chat"].map(
      (g) => html`<button aria-label=${g}>${drawGlyph(g, 12)}</button>`
    );
  }
}

@customElement("sw-footer")
export class SwFooter extends LitElement {
  @property({ type: String }) edition = "SOLIDWORKS Premium 2016 x64 Edition";

  static styles = [
    base,
    css`
      :host {
        display: block;
        background: #f8f8f8;
        border-top: 1px solid #9b9b9b;
        font-size: 8px;
        color: #222;
      }
      .views {
        display: flex;
        height: 11px;
        border-bottom: 1px solid #8f8f8f;
      }
      .nav {
        width: 11px;
        background: #8b91a9;
        border: 1px solid #747a94;
      }
      .view {
        padding: 0 8px;
        background: #d7d7d6;
        border-right: 1px solid #9b9b9b;
        white-space: nowrap;
      }
      .view.active {
        background: #fff;
        font-weight: 700;
      }
      .status {
        display: flex;
        align-items: center;
        height: 11px;
        color: #45494b;
        line-height: 11px;
        white-space: nowrap;
      }
      .edition {
        flex: 1;
        padding-left: 1px;
      }
      .cell {
        text-align: right;
      }
      .x {
        width: 48px;
      }
      .z {
        width: 27px;
      }
      .state {
        width: 105px;
        padding-right: 4px;
        border-right: 1px solid #d0d0d0;
      }
      .edit {
        width: 69px;
        margin-left: 3px;
        padding-right: 3px;
        border: 1px solid #d0d0d0;
        border-width: 0 1px;
      }
      .units {
        width: 57px;
        margin-left: 7px;
        border-left: 1px solid #d0d0d0;
      }
      .up {
        width: 55px;
      }
      .coin {
        width: 31px;
        justify-content: flex-end;
        padding-right: 1px;
      }
    `,
  ];

  render() {
    const nav = ["M5 1v5M4 1L1 3.500 4 6", "M4 1L1 3.500 4 6", "M1 1l3 2.500L1 6", "M5 1v5M1 1l3 2.500L1 6"];
    return html`
      <div class="views">
        ${nav.map(
          (d, i) => html`<button class="nav" aria-label=${"Vista " + (i + 1)}>
            <svg width="6" height="7" viewBox="0 0 6 7"><path d=${d} fill="none" stroke="#5f6685" /></svg>
          </button>`
        )}
        ${["Modelo", "Vistas 3D", "Estudio de movimiento 1"].map(
          (t, i) => html`<button class=${classMap({ view: true, active: i === 0 })}>${t}</button>`
        )}
      </div>
      <div class="status">
        <span class="edition">${this.edition}</span>
        <span class="cell x">-75.21mm</span>
        <span class="cell x">68.51mm</span>
        <span class="cell z">0mm</span>
        <span class="cell state">Completamente definido</span>
        <span class="cell edit">Editando Croquis1</span>
        <span class="cell units">MMGS</span>
        <button class="up" aria-label="Unidades">
          <svg width="4" height="3" viewBox="0 0 4 3"><path d="M.500 2.500h3L2 .500z" fill="#3f4448" /></svg>
        </button>
        <button class="coin" aria-label="Etiquetas">${drawGlyph("coin", 11)}</button>
      </div>
    `;
  }
}

@customElement("app-root")
export class AppRoot extends LitElement {
  static styles = css`
    :host {
      display: flex;
      flex-direction: column;
      height: 100vh;
      overflow: hidden;
      background: #c2c7d3;
      font: 8px/12px "Lato", "Open Sans", sans-serif;
    }
    .body {
      flex: 1;
      min-height: 0;
      display: flex;
      position: relative;
      background: linear-gradient(#f4f5f5, #f4f5f5) right / 3px 100% no-repeat;
    }
  `;

  render() {
    return html`
      <sw-titlebar></sw-titlebar>
      <sw-ribbon></sw-ribbon>
      <sw-command-tabs></sw-command-tabs>
      <div class="body">
        <sw-feature-tree></sw-feature-tree>
        <sw-viewport></sw-viewport>
        <sw-task-pane></sw-task-pane>
      </div>
      <sw-footer></sw-footer>
    `;
  }
}
